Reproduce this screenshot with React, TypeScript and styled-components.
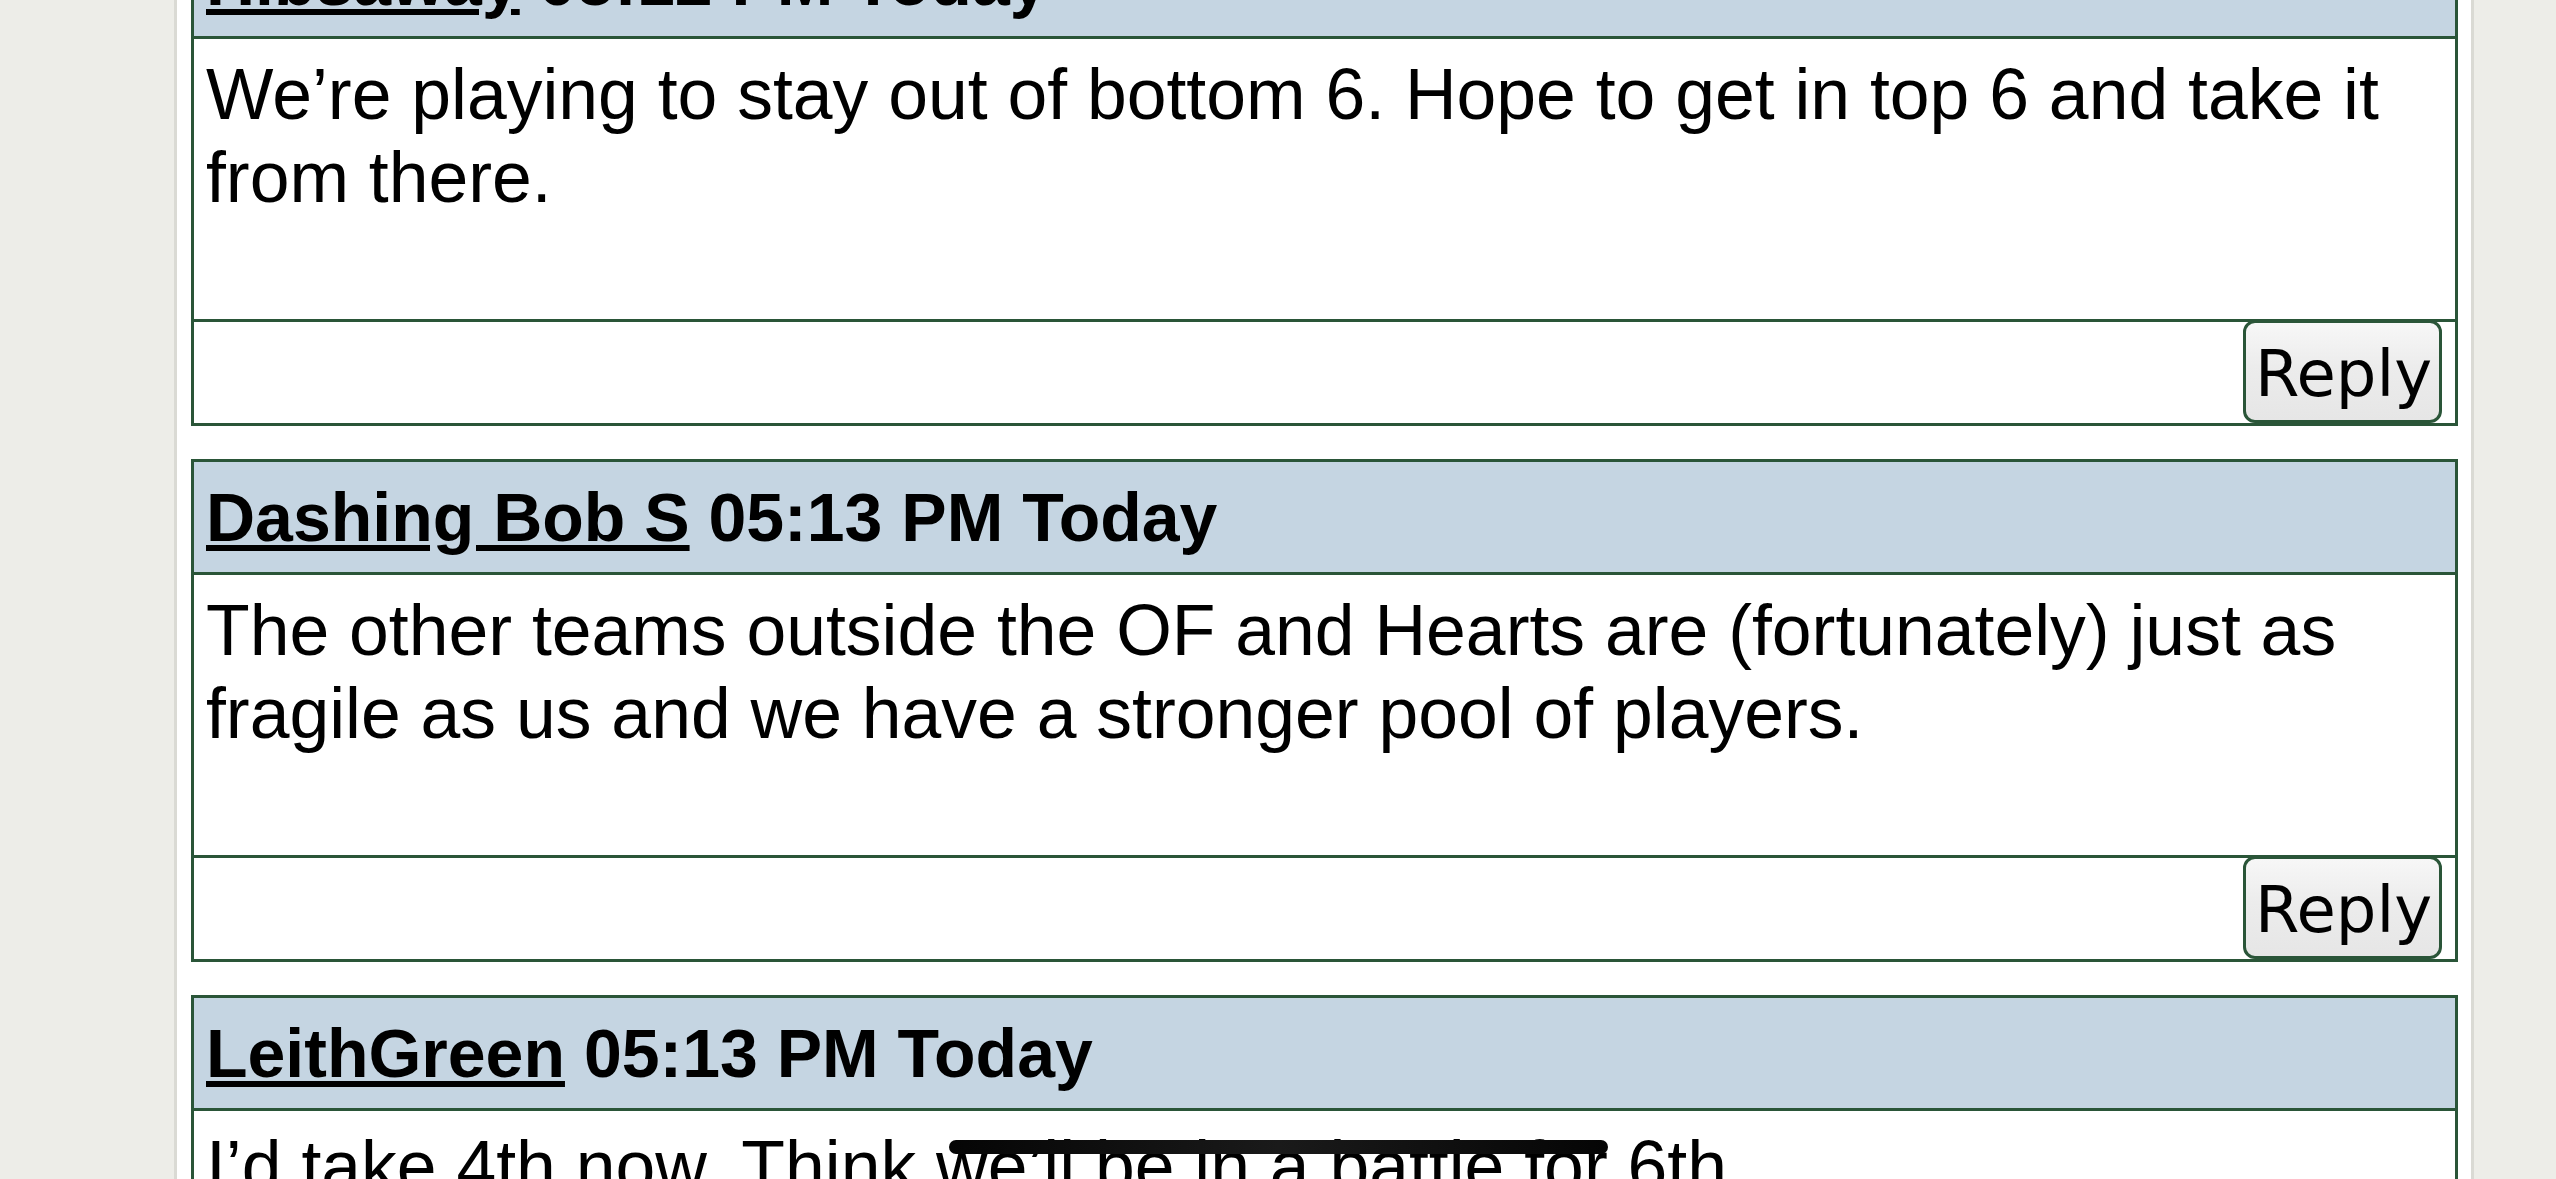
import React from "react";
import styled, { createGlobalStyle } from "styled-components";

const GlobalStyle = createGlobalStyle`
  html, body {
    margin: 0;
    padding: 0;
    background: #edede8;
    overflow: hidden;
  }
  body {
    font-family: "Liberation Sans", Arial, sans-serif;
    color: #000;
  }
`;

const Page = styled.div`
  display: flex;
  height: 100vh;
`;

const Column = styled.main`
  box-sizing: border-box;
  margin-left: 174px;
  width: 2300px;
  height: 100vh;
  overflow: hidden;
  background: #ffffff;
  border-left: 3px solid #dadad4;
  border-right: 3px solid #dadad4;
  padding: 0 13px 0 14px;
`;

const Feed = styled.div`
  display: flex;
  flex-direction: column;
  gap: 33px;
  margin-top: -77px;
`;

const Post = styled.article`
  border: 3px solid #2a5538;
  background: #ffffff;
`;

const PostHeader = styled.header`
  background: #c5d5e2;
  border-bottom: 3px solid #2a5538;
  padding: 16px 12px;
  font-weight: 700;
  font-size: 68px;
  line-height: 78px;
  white-space: nowrap;
`;

const Author = styled.a`
  color: #000;
  text-decoration: underline;
`;

const PostBody = styled.div`
  position: relative;
  box-sizing: border-box;
  height: 283px;
  border-bottom: 3px solid #2a5538;
  padding: 14px 12px 0 12px;
  font-size: 71.5px;
  line-height: 83px;
`;

const PostFooter = styled.div`
  display: flex;
  justify-content: flex-end;
  height: 101px;
  padding-right: 13px;
`;

const ReplyButton = styled.button`
  box-sizing: border-box;
  width: 199px;
  height: 103px;
  margin-top: -2px;
  padding: 5px 0 0 2px;
  border: 3px solid #2a5538;
  border-radius: 12px;
  background: linear-gradient(to bottom, #f7f7f7 0%, #ececec 45%, #e6e6e6 100%);
  font-family: "DejaVu Sans", Verdana, sans-serif;
  font-size: 64px;
  color: #000;
  cursor: pointer;
`;

/* a marker stroke someone drew across part of the last comment */
const MarkerStroke = styled.span<{ $left: number; $top: number; $width: number }>`
  position: absolute;
  left: ${(p) => p.$left}px;
  top: ${(p) => p.$top}px;
  width: ${(p) => p.$width}px;
  height: 14px;
  border-radius: 7px;
  background: linear-gradient(to right, #050505, #1a1a1a 50%, #050505);
`;

type Comment = {
  author: string;
  time: string;
  text: string;
  stroke?: { left: number; top: number; width: number };
};

const comments: Comment[] = [
  {
    author: "Hibsaway",
    time: "05:12 PM Today",
    text: "We’re playing to stay out of bottom 6. Hope to get in top 6 and take it from there.",
  },
  {
    author: "Dashing Bob S",
    time: "05:13 PM Today",
    text: "The other teams outside the OF and Hearts are (fortunately) just as fragile as us and we have a stronger pool of players.",
  },
  {
    author: "LeithGreen",
    time: "05:13 PM Today",
    text: "I’d take 4th now. Think we’ll be in a battle for 6th",
    stroke: { left: 755, top: 29, width: 659 },
  },
];

export default function App() {
  return (
    <>
      <GlobalStyle />
      <Page>
        <Column>
          <Feed>
            {comments.map((c) => (
              <Post key={c.author}>
                <PostHeader>
                  <Author href="#">{c.author}</Author> {c.time}
                </PostHeader>
                <PostBody>
                  {c.text}
                  {c.stroke && (
                    <MarkerStroke
                      $left={c.stroke.left}
                      $top={c.stroke.top}
                      $width={c.stroke.width}
                    />
                  )}
                </PostBody>
                <PostFooter>
                  <ReplyButton type="button">Reply</ReplyButton>
                </PostFooter>
              </Post>
            ))}
          </Feed>
        </Column>
      </Page>
    </>
  );
}
